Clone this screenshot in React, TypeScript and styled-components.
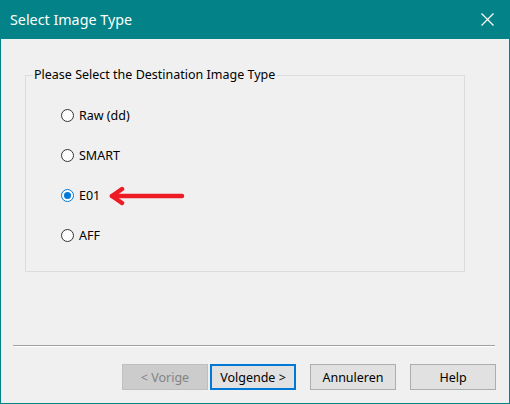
import React from "react";
import styled, { createGlobalStyle } from "styled-components";

const Global = createGlobalStyle`
  html, body { margin: 0; padding: 0; background: #ffffff; }
  * { box-sizing: border-box; }
`;

const Window = styled.div`
  width: 510px;
  height: 404px;
  display: flex;
  flex-direction: column;
  background: #f0f0f0;
  border: 1px solid #038387;
  border-top: none;
  font-family: "Noto Sans", "Open Sans", sans-serif;
  font-size: 12.5px;
  color: #000;
`;

const TitleBar = styled.div`
  height: 39px;
  margin: 0 -1px;
  background: #038387;
  display: flex;
  align-items: center;
  justify-content: space-between;
  padding: 0 0 1px 10px;
  color: #ffffff;
  font-family: "Noto Sans", "Open Sans", sans-serif;
  font-size: 14.3px;
`;

const CloseButton = styled.div`
  width: 46px;
  height: 39px;
  display: flex;
  align-items: center;
  justify-content: center;
`;

const Body = styled.div`
  flex: 1;
  display: flex;
  flex-direction: column;
  padding: 28px 0 13px 0;
`;

const Group = styled.fieldset`
  margin: 0 44px 0 24px;
  padding: 0 0 0 7px;
  height: 205px;
  border: 1px solid #dcdcdc;
`;

const Legend = styled.legend`
  padding: 0 2px 0 1px;
  font-size: 12.5px;
  line-height: 16px;
`;

const Options = styled.div`
  display: flex;
  flex-direction: column;
  gap: 27px;
  padding: 26px 0 0 28px;
`;

const OptionRow = styled.label`
  display: flex;
  align-items: center;
  height: 13px;
`;

const Radio = styled.span<{ $checked?: boolean }>`
  width: 13px;
  height: 13px;
  border-radius: 50%;
  border: 1px solid ${(p) => (p.$checked ? "#0078d7" : "#333333")};
  background: #ffffff;
  display: flex;
  align-items: center;
  justify-content: center;
  margin-right: 5px;
  flex: none;
  &::after {
    content: "";
    width: 7px;
    height: 7px;
    border-radius: 50%;
    background: ${(p) => (p.$checked ? "#0078d7" : "transparent")};
  }
`;

const Arrow = styled.svg`
  margin-left: 9px;
  flex: none;
`;

const Separator = styled.div`
  margin: auto 14px 0 12px;
  border-top: 1px solid #a0a0a0;
  border-bottom: 1px solid #ffffff;
`;

const ButtonRow = styled.div`
  display: flex;
  justify-content: flex-end;
  padding: 0 13px 0 0;
  margin-top: 17px;
`;

const Button = styled.button<{ $variant?: "default" | "primary" | "disabled"; $gap?: number }>`
  width: 86px;
  height: 26px;
  margin-left: ${(p) => p.$gap ?? 14}px;
  font-family: "Noto Sans", "Open Sans", sans-serif;
  font-size: 12.5px;
  padding: 0;
  background: ${(p) => (p.$variant === "disabled" ? "#cccccc" : "#e1e1e1")};
  color: ${(p) => (p.$variant === "disabled" ? "#838383" : "#000000")};
  border: ${(p) =>
    p.$variant === "primary"
      ? "2px solid #0078d7"
      : p.$variant === "disabled"
      ? "1px solid #bfbfbf"
      : "1px solid #adadad"};
`;

const options = [
  { label: "Raw (dd)", checked: false },
  { label: "SMART", checked: false },
  { label: "E01", checked: true },
  { label: "AFF", checked: false },
];

export default function App() {
  return (
    <>
      <Global />
      <Window>
        <TitleBar>
          <span>Select Image Type</span>
          <CloseButton>
            <svg width="13" height="13" viewBox="0 0 13 13">
              <path d="M0.5 0.5 L12.5 12.5 M12.5 0.5 L0.5 12.5" stroke="#ffffff" strokeWidth="1.2" />
            </svg>
          </CloseButton>
        </TitleBar>
        <Body>
          <Group>
            <Legend>Please Select the Destination Image Type</Legend>
            <Options>
              {options.map((o) => (
                <OptionRow key={o.label}>
                  <Radio $checked={o.checked} />
                  <span>{o.label}</span>
                  {o.checked && (
                    <Arrow width="76" height="22" viewBox="0 0 76 22">
                      <path
                        d="M3 11 L73 11"
                        stroke="#ed1c24"
                        strokeWidth="4.5"
                        strokeLinecap="round"
                      />
                      <path
                        d="M13 4 L3 11 L13 18"
                        stroke="#ed1c24"
                        strokeWidth="4.5"
                        fill="none"
                        strokeLinecap="round"
                        strokeLinejoin="round"
                      />
                    </Arrow>
                  )}
                </OptionRow>
              ))}
            </Options>
          </Group>
          <Separator />
          <ButtonRow>
            <Button $variant="disabled" $gap={0} disabled>
              &lt; Vorige
            </Button>
            <Button $variant="primary" $gap={2}>
              Volgende &gt;
            </Button>
            <Button>Annuleren</Button>
            <Button>Help</Button>
          </ButtonRow>
        </Body>
      </Window>
    </>
  );
}
